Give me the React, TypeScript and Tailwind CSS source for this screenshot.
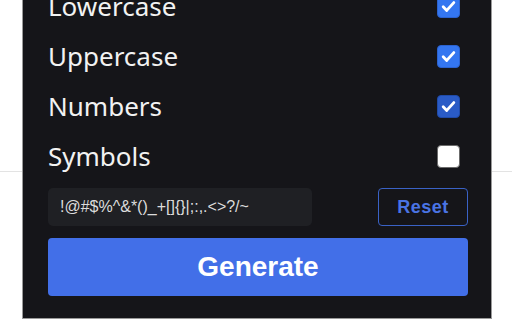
import React from "react";

function Check() {
  return (
    <svg viewBox="0 0 24 24" className="w-[17px] h-[17px]" fill="none">
      <path d="M4.5 12.5l5 5L19.5 6.5" stroke="white" strokeWidth="4" strokeLinecap="round" strokeLinejoin="round" />
    </svg>
  );
}

function Box({ checked, dark }: { checked: boolean; dark?: boolean }) {
  if (!checked) {
    return <div className="shrink-0 mr-[8px] w-[23px] h-[23px] rounded-[4px] bg-white border-[1.5px] border-[#6b6b6b]" />;
  }
  return (
    <div
      className={
        dark
          ? "shrink-0 mr-[8px] w-[23px] h-[23px] rounded-[4px] bg-[#2a5bc6] border border-[#1f4aa8] flex items-center justify-center"
          : "shrink-0 mr-[8px] w-[23px] h-[23px] rounded-[4px] bg-[#3476f0] border border-[#2b62cf] flex items-center justify-center"
      }
    >
      <Check />
    </div>
  );
}

function Row({ label, checked, dark }: { label: string; checked: boolean; dark?: boolean }) {
  return (
    <div className="shrink-0 h-[50px] flex items-center justify-between">
      <span className="text-[26px] leading-none text-[#f2f2f2]" style={{ fontFamily: '"Noto Sans", "Open Sans", sans-serif' }}>
        {label}
      </span>
      <Box checked={checked} dark={dark} />
    </div>
  );
}

export default function App() {
  return (
    <div className="w-[512px] h-[320px] bg-white relative overflow-hidden">
      <div className="h-[172px] border-b border-[#e3e3e3]" />
      <div className="absolute left-[22px] top-0 w-[470px] h-[319px] bg-[#151519] border-x border-b border-[#9a9a9a] flex flex-col justify-end pl-[25px] pr-[23px] pb-[22px] overflow-hidden">
        <div className="shrink-0 flex flex-col mb-[7px]">
          <Row label="Lowercase" checked />
          <Row label="Uppercase" checked />
          <Row label="Numbers" checked dark />
          <Row label="Symbols" checked={false} />
        </div>
        <div className="shrink-0 flex items-center justify-between h-[38px]">
          <div
            className="w-[264px] h-[38px] rounded-[5px] bg-[#1f2024] flex items-center px-[12px] text-[16px] text-[#dcdcdc]"
            style={{ fontFamily: '"Liberation Sans", Arial, sans-serif' }}
          >
            !@#$%^&amp;*()_+[]{"{}"}|;:,.&lt;&gt;?/~
          </div>
          <button
            className="w-[90px] h-[38px] rounded-[4px] border border-[#3a62c6] bg-transparent text-[#4a74e4] text-[18px] font-bold tracking-[0.5px] flex items-center justify-center"
            style={{ fontFamily: '"Liberation Sans", Arial, sans-serif' }}
          >
            Reset
          </button>
        </div>
        <button
          className="shrink-0 mt-[12px] h-[58px] w-full rounded-[4px] bg-[#426fe8] text-white text-[28px] font-bold flex items-center justify-center"
          style={{ fontFamily: '"Liberation Sans", Arial, sans-serif' }}
        >
          Generate
        </button>
      </div>
    </div>
  );
}
